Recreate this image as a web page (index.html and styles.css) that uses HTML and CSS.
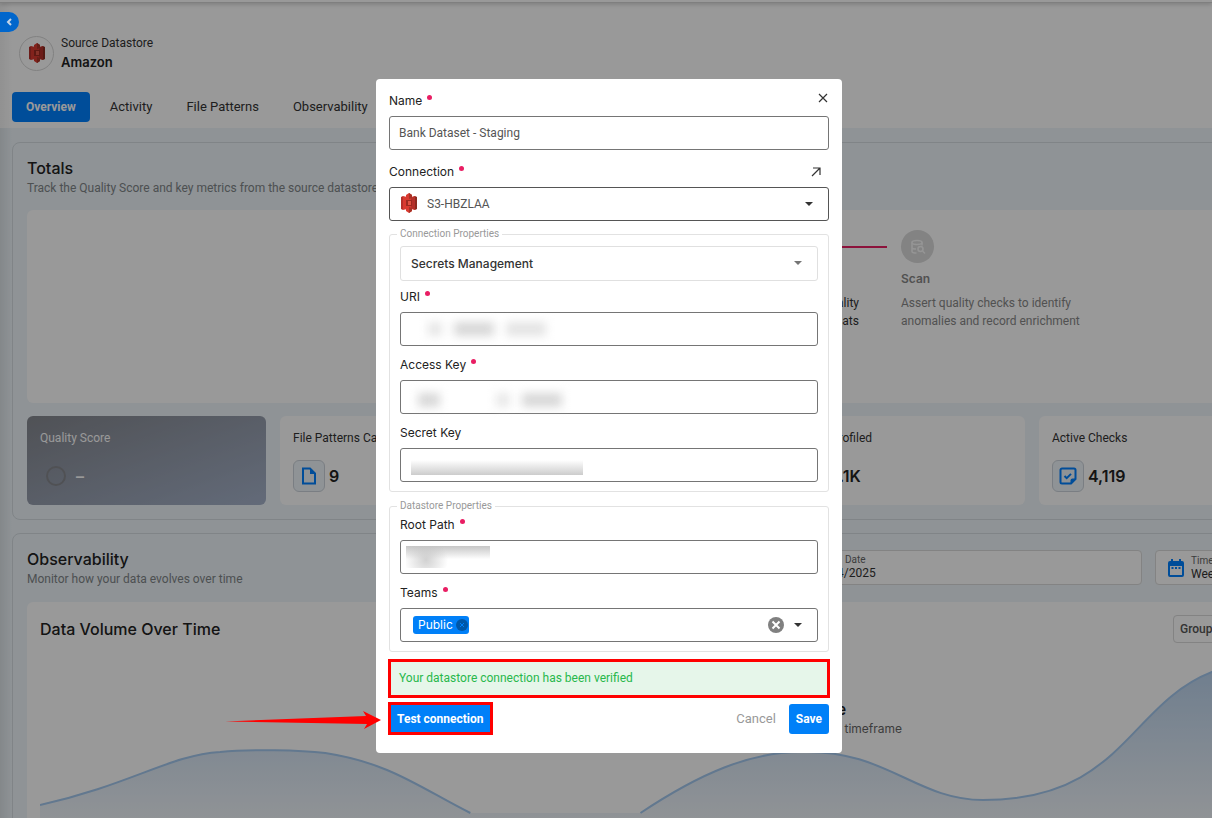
FILE: index.html
```html
<!DOCTYPE html>
<html lang="en">
<head>
<meta charset="utf-8">
<title>Amazon – Source Datastore</title>
<link rel="stylesheet" href="styles.css">
</head>
<body>
<svg class="defs" aria-hidden="true">
  <symbol id="s3" viewBox="0 0 18 20">
    <path fill="#b5302a" d="M1 4l2-1v14l-2-1z"/>
    <path fill="#d93a30" d="M3 3l4 1h4l4-1v14l-4-1H7l-4 1z"/>
    <path fill="#8c2a20" d="M15 3l2 1v12l-2 1z"/>
    <path fill="#b5302a" d="M11 5l4-2v14l-4-2z"/>
    <path fill="#d93a30" d="M6 2l3-2 3 2v3L9 6 6 5z"/>
    <path fill="#a83226" d="M9 0l3 2v3L9 6z"/>
    <path fill="#d93a30" d="M6 18l3 2 3-2v-3l-3-1-3 1z"/>
    <path fill="#a83226" d="M9 20l3-2v-3l-3-1z"/>
    <path fill="#9c2a20" d="M6 7h6v6H6z"/>
    <path fill="#e05243" d="M8 8h3v4H8z"/>
  </symbol>
  <symbol id="caret" viewBox="0 0 8 4"><path fill="currentColor" d="M0 0h8L4 4z"/></symbol>
</svg>

<div class="shell">
  <div class="topbar"></div>
  <main class="page">
    <header class="head">
      <div class="source">
        <span class="avatar"><svg width="18" height="20"><use href="#s3"/></svg></span>
        <div>
          <p class="kind">Source Datastore</p>
          <h1 class="store">Amazon</h1>
        </div>
      </div>
      <nav class="tabs">
        <a class="tab tab-on" href="#">Overview</a>
        <a class="tab" href="#">Activity</a>
        <a class="tab" href="#">File Patterns</a>
        <a class="tab" href="#">Observability</a>
      </nav>
    </header>

    <section class="panel">
      <h2 class="title">Totals</h2>
      <p class="sub">Track the Quality Score and key metrics from the source datastore</p>
      <div class="steps">
        <div class="step step-done">
          <div class="rail"></div>
          <p class="step-text">quality<br>formats</p>
        </div>
        <div class="step">
          <span class="bubble">
            <svg width="16" height="16" viewBox="0 0 16 16" fill="none" stroke="currentColor" stroke-width="1.600">
              <ellipse cx="7" cy="3.500" rx="5" ry="2"/><path d="M2 3.500v9c0 1 2 1.500 4.500 1.500M2 8.500c0 1 2 1.500 4 1.500M12 3.500v3"/><circle cx="10.500" cy="10" r="2.500"/><path d="M12.500 12l2.500 2.500"/>
            </svg>
          </span>
          <h3 class="step-name">Scan</h3>
          <p class="step-text">Assert quality checks to identify<br>anomalies and record enrichment</p>
        </div>
      </div>
      <div class="cards">
        <article class="card card-score">
          <h3 class="card-name">Quality Score</h3>
          <div class="metric"><span class="ring"></span><span class="dash">–</span></div>
        </article>
        <article class="card">
          <h3 class="card-name">File Patterns Ca</h3>
          <div class="metric">
            <span class="tile"><svg width="16" height="18" viewBox="0 0 16 18"><path fill="none" stroke="currentColor" stroke-width="2" d="M2 1.500h7l5 5v10H2z"/><path fill="currentColor" d="M9 1l6 6H9z"/></svg></span>
            <strong>9</strong>
          </div>
        </article>
        <article class="card card-blank"></article>
        <article class="card card-profiled">
          <h3 class="card-name">Profiled</h3>
          <div class="metric"><strong>.1K</strong></div>
        </article>
        <article class="card">
          <h3 class="card-name">Active Checks</h3>
          <div class="metric">
            <span class="tile"><svg width="18" height="18" viewBox="0 0 18 18"><path fill="none" stroke="currentColor" stroke-width="2" stroke-linejoin="round" d="M3 1.500h12a1.500 1.500 0 0 1 1.500 1.500v9L12 16.500H3A1.500 1.500 0 0 1 1.500 15V3A1.500 1.500 0 0 1 3 1.500z"/><path fill="currentColor" d="M17 11.500h-3.500a2 2 0 0 0-2 2V17z"/><path fill="none" stroke="currentColor" stroke-width="2" d="M5.500 9l2.200 2.200 4.300-4.300"/></svg></span>
            <strong>4,119</strong>
          </div>
        </article>
      </div>
    </section>

    <section class="panel panel-next">
      <div class="obs-head">
        <div>
          <h2 class="title">Observability</h2>
          <p class="sub">Monitor how your data evolves over time</p>
        </div>
        <div class="filters">
          <div class="filter filter-date"><span class="tiny">Date</span><span>4/2025</span></div>
          <div class="filter filter-time">
            <svg width="16" height="18" viewBox="0 0 16 18"><path fill="currentColor" fill-rule="evenodd" d="M2 2h1V0h2v2h6V0h2v2h1a2 2 0 0 1 2 2v12a2 2 0 0 1-2 2H2a2 2 0 0 1-2-2V4a2 2 0 0 1 2-2zm0 5v9h12V7z"/><path fill="currentColor" d="M3.500 8h2v2h-2zM7 8h2v2H7zM10.500 8h2v2h-2z"/></svg>
            <div class="stack"><span class="tiny">Timeframe</span><span>Week</span></div>
          </div>
        </div>
      </div>
      <div class="chart-card">
        <div class="chart-head">
          <h3 class="title">Data Volume Over Time</h3>
          <button class="group" type="button">Group By</button>
        </div>
        <svg class="chart" viewBox="0 0 1224 170" preserveAspectRatio="none" aria-hidden="true">
          <defs><linearGradient id="fill" x1="0" y1="0" x2="0" y2="1"><stop offset="0" stop-color="#b4cfec"/><stop offset="1" stop-color="#f0f5fa"/></linearGradient></defs>
          <path fill="url(#fill)" d="M0 157C90 137 130 107 180 104 210 101 260 102 285 105 350 115 380 140 430 165L600 165C660 125 710 104 760 104 845 101 875 152 942 152 1082 152 1087 57 1171 24L1224 5V170H0z"/>
          <path class="curve" d="M0 157C90 137 130 107 180 104 210 101 260 102 285 105 350 115 380 140 430 165M600 165C660 125 710 104 760 104 845 101 875 152 942 152 1082 152 1087 57 1171 24L1224 5"/>
        </svg>
        <div class="notice"><strong>e</strong><span>timeframe</span></div>
      </div>
    </section>
  </main>
</div>

<div class="overlay">
  <form class="dialog" role="dialog" aria-label="Edit datastore">
    <div class="row">
      <label class="label req" for="name">Name</label>
      <button class="icon-btn" type="button" aria-label="Close"><svg width="12" height="12" viewBox="0 0 12 12"><path class="line" d="M2 2l8 8M10 2l-8 8"/></svg></button>
    </div>
    <input class="field" id="name" type="text" value="Bank Dataset - Staging">

    <div class="row row-gap">
      <label class="label req" for="conn">Connection</label>
      <button class="icon-btn icon-link" type="button" aria-label="Open connection"><svg width="12" height="12" viewBox="0 0 12 12"><path class="line" d="M2 10l8-8M3 2h7v7"/></svg></button>
    </div>
    <div class="pick">
      <select class="field field-logo" id="conn"><option>S3-HBZLAA</option></select>
      <svg class="pick-logo" width="18" height="20"><use href="#s3"/></svg>
      <svg class="pick-caret" width="8" height="4"><use href="#caret"/></svg>
    </div>

    <fieldset class="group-box">
      <legend>Connection Properties</legend>
      <div class="pick pick-soft">
        <select class="field field-soft" aria-label="Secrets Management"><option>Secrets Management</option></select>
        <svg class="pick-caret" width="8" height="4"><use href="#caret"/></svg>
      </div>
      <label class="label req label-first" for="uri">URI</label>
      <div class="pick"><input class="field" id="uri" type="text"><span class="smudge smudge-uri"><i></i><i></i><i></i></span></div>
      <label class="label req label-next" for="akey">Access Key</label>
      <div class="pick"><input class="field" id="akey" type="text"><span class="smudge smudge-key"><i></i><i></i><i></i></span></div>
      <label class="label label-next" for="skey">Secret Key</label>
      <div class="pick"><input class="field" id="skey" type="password"><span class="fade"></span></div>
    </fieldset>

    <fieldset class="group-box group-store">
      <legend>Datastore Properties</legend>
      <label class="label req" for="root">Root Path</label>
      <div class="pick"><input class="field" id="root" type="text"><span class="fade-top"></span></div>
      <span class="label req label-next" id="teams-label">Teams</span>
      <div class="field teams" role="group" aria-labelledby="teams-label">
        <span class="chip">Public
          <button class="chip-x" type="button" aria-label="Remove Public"><svg width="12" height="12" viewBox="0 0 12 12"><circle cx="6" cy="6" r="6" fill="#0057a8"/><path stroke="#0080f8" d="M4 4l4 4M8 4l-4 4"/></svg></button>
        </span>
        <button class="clear" type="button" aria-label="Clear teams"><svg width="16" height="16" viewBox="0 0 16 16"><circle cx="8" cy="8" r="8" fill="#808080"/><path stroke="#fff" stroke-width="2" d="M4.500 4.500l7 7M11.500 4.500l-7 7"/></svg></button>
        <svg width="8" height="4"><use href="#caret"/></svg>
      </div>
    </fieldset>

    <p class="alert" role="status">Your datastore connection has been verified</p>
    <div class="actions">
      <div class="marked">
        <svg class="pointer" width="156" height="20" viewBox="0 0 156 20" aria-hidden="true"><path fill="#f00" d="M0 11.500L141 6l-3-5 18 9-17 9 3-5z"/></svg>
        <button class="btn btn-test" type="button">Test connection</button>
      </div>
      <button class="btn btn-plain" type="button">Cancel</button>
      <button class="btn" type="submit">Save</button>
    </div>
  </form>
</div>

<button class="toggle" type="button" aria-label="Collapse"><svg width="6" height="8" viewBox="0 0 6 8"><path fill="none" stroke="#c4d4e6" stroke-width="2" d="M5 1L2 4l3 3"/></svg></button>
</body>
</html>
```

FILE: styles.css
```css
* { box-sizing: border-box; }
body, h1, h2, h3, p { margin: 0; }
body, button, input, select {
  font-family: Roboto, "Noto Sans", sans-serif;
  font-size: 12px;
  color: #333;
}
body { line-height: 18px; }
button { border: 0; background: none; padding: 0; cursor: pointer; }
.defs { position: absolute; width: 0; height: 0; }
.label, .store, .title, .field-soft, .chip, .metric, .notice, .step-name { font-family: Inter, "Noto Sans", sans-serif; }

/* Page behind the dialog: wider than the window, cut at its right edge */
.shell { height: 100vh; overflow: hidden; background: #eef5fa; }
.topbar { height: 3px; background: #fff; border-bottom: 1px solid #d4d4d4; box-shadow: 0 1px 4px rgba(0, 0, 0, .25); position: relative; }
.page { width: calc(100% + 81px); background: linear-gradient(90deg, rgba(0, 0, 0, .08), transparent 12px); }

.head { background: linear-gradient(90deg, #f2f2f2, #fff 12px); padding: 31px 12px 6px; }
.source { display: flex; align-items: center; gap: 7px; padding-left: 7px; }
.avatar { width: 35px; height: 35px; border: 1px solid #d8d8d8; border-radius: 50%; display: grid; place-items: center; }
.kind { line-height: 18px; }
.store { font-size: 13px; font-weight: 600; line-height: 20px; color: #222; }
.tabs { display: flex; gap: 6px; margin-top: 20px; }
.tab { padding: 6px 14px; border-radius: 4px; color: #333; font-size: 13px; font-weight: 400; text-decoration: none; }
.tab-on { background: #0080ff; color: #fff; font-size: 12px; font-weight: 700; }

.panel { margin: 14px 0 0 12px; padding: 14px; border: 1px solid #d5dde2; border-radius: 8px; }
.panel-next { margin-top: 13px; }
.title { font-size: 16px; font-weight: 500; line-height: 22px; color: #222; }
.sub { color: #808588; line-height: 18px; }

.steps { display: grid; grid-template-columns: 1fr 377px; height: 193px; margin-top: 13px; padding-top: 20px; background: #fff; border-radius: 6px; }
.step { color: #888; }
.step-done { color: #333; display: flex; flex-direction: column; align-items: flex-end; padding-right: 14px; text-align: right; }
.step-done .step-text { padding-right: 28px; margin-top: 46px; }
.rail { width: 72px; height: 2px; margin-top: 16px; background: #e91e63; }
.bubble { display: grid; place-items: center; width: 33px; height: 33px; border-radius: 50%; background: #dadada; color: #f8f8f8; }
.step-name { font-size: 12px; font-weight: 600; line-height: 18px; margin: 7px 0 6px; }

.cards { display: grid; grid-template-columns: repeat(5, 1fr); gap: 14px; margin-top: 13px; }
.card { height: 89px; padding: 13px; background: #fff; border-radius: 6px; }
.card-name { font-size: 12px; font-weight: 400; line-height: 18px; color: #333; white-space: nowrap; }
.metric { display: flex; align-items: center; gap: 4px; height: 32px; margin-top: 13px; }
.metric strong { font-size: 16px; font-weight: 600; color: #222; }
.card-score { background: linear-gradient(160deg, #85888f, #a5b2ca); }
.card-score .card-name { color: #fff; }
.ring { width: 20px; height: 20px; margin: 0 4px 0 6px; border: 2px solid #85878d; border-radius: 50%; }
.dash { font-size: 16px; font-weight: 600; color: #fff; padding-left: 2px; }
.card-profiled { padding-left: 45px; }
.card-profiled .metric { padding-left: 8px; }
.tile { display: grid; place-items: center; width: 32px; height: 32px; border: 1px solid #ccd3da; border-radius: 6px; background: #eef5fa; color: #0080ff; }

.obs-head { display: flex; justify-content: space-between; }
.filters { display: flex; gap: 13px; margin-top: 2px; }
.filter { height: 35px; background: #fff; border: 1px solid #dadada; border-radius: 4px; line-height: 14px; padding: 3px 12px; }
.filter-date { width: 440px; padding-left: 134px; display: flex; flex-direction: column; }
.filter-date .tiny { padding-left: 8px; }
.filter-time { width: 123px; display: flex; align-items: center; gap: 7px; }
.filter-time svg { color: #0080ff; }
.stack { display: flex; flex-direction: column; }
.tiny { font-size: 10px; line-height: 12px; color: #666; }
.chart-card { position: relative; margin-top: 14px; padding: 13px; background: #fff; border-radius: 6px; }
.chart-head { display: flex; justify-content: space-between; align-items: center; }
.group { height: 28px; width: 92px; border: 1px solid #dadada; border-radius: 4px; text-align: left; padding: 0 6px; color: #555; font-weight: 500; }
.chart { display: block; width: 100%; height: 170px; margin-top: 5px; }
.curve { fill: none; stroke: #a3c8ef; stroke-width: 2; }
.notice { position: absolute; top: 98px; right: 376px; display: flex; flex-direction: column; align-items: flex-end; color: #666; }
.notice strong { font-size: 15px; font-weight: 600; line-height: 20px; color: #222; padding-right: 56px; }

/* Dialog */
.overlay { position: fixed; inset: 0; display: grid; place-items: center; padding: 14px 0 0 6px; background: rgba(0, 0, 0, .4); }
.dialog { width: 100%; max-width: 466px; padding: 13px 13px 18px; background: #fff; border-radius: 4px; }
.row { display: flex; justify-content: space-between; align-items: center; height: 18px; margin-bottom: 6px; }
.row-gap { margin-top: 13px; }
.label { display: block; width: fit-content; font-weight: 400; line-height: 18px; color: #222; margin-bottom: 6px; }
.row .label { margin: 0; }
.label.label-first { margin-top: 7px; }
.label.label-next { margin-top: 10px; }
.req::after { content: ""; display: inline-block; width: 5px; height: 5px; margin-left: 5px; border-radius: 50%; background: #e91e63; vertical-align: 5px; }
.icon-btn { display: grid; padding-bottom: 6px; }
.icon-link { padding: 0 7px 0 0; }
.line { fill: none; stroke: #333; stroke-width: 1.2; }
.field { appearance: none; display: block; width: 100%; height: 34px; padding: 0 9px; border: 1px solid #757575; border-radius: 3px; background: #fff; color: #555; }
.field-logo { padding-left: 37px; border-color: #555; }
.pick { position: relative; color: #333; }
.pick-logo { position: absolute; left: 11px; top: 6px; }
.pick-caret { position: absolute; right: 16px; top: 15px; }
.pick-soft { color: #757575; }
.field-soft { height: 35px; padding: 0 10px; border-color: #e0e0e0; color: #333; font-weight: 500; }
.group-box { min-width: 0; margin: 6px 0 0; padding: 5px 10px 9px; border: 1px solid #e2e2e2; border-radius: 3px; }
.group-box legend { margin-left: -3px; padding: 0 3px; font-size: 10px; line-height: 14px; color: #999; }
.group-store { margin-top: 7px; padding-top: 3px; }

/* Obscured values */
.smudge { position: absolute; left: 18px; top: 10px; display: flex; gap: 12px; filter: blur(5px); pointer-events: none; }
.smudge i { height: 14px; width: 40px; background: #d8d8d8; }
.smudge-uri { left: 28px; }
.smudge-uri i:first-child { width: 14px; background: #e6e6e6; }
.smudge-uri i:last-child { background: #e4e4e4; }
.smudge-key { top: 13px; }
.smudge-key i:first-child { width: 22px; margin-right: 44px; }
.smudge-key i:nth-child(2) { width: 14px; background: #e8e8e8; }
.fade { position: absolute; left: 11px; top: 12px; width: 172px; height: 15px; background: linear-gradient(#fff, #ccc); }
.fade-top { position: absolute; left: 6px; top: 6px; width: 84px; height: 22px; background: radial-gradient(circle at 20px 14px, rgba(190, 190, 190, .7), transparent 22px), linear-gradient(#c6c6c6, #fff 60%); }

.teams { display: flex; align-items: center; gap: 10px; padding: 0 15px 0 12px; color: #333; }
.chip { display: flex; align-items: center; gap: 3px; height: 18px; padding: 0 1px 0 5px; border-radius: 3px; background: #0080f8; color: #fff; }
.chip-x, .clear { display: grid; }
.clear { margin-left: auto; }
.alert { height: 39px; margin: 7px -1px 4px; padding: 0 8px; border: 3px solid #f00; background: #e6f6ea; color: #28b84c; line-height: 33px; }
.actions { display: flex; align-items: center; gap: 6px; }
.marked { position: relative; margin: 0 auto 0 -1px; border: 3px solid #f00; }
.pointer { position: absolute; right: calc(100% + 10px); top: 5px; }
.btn { height: 30px; padding: 0 7px; border-radius: 3px; background: #0080f8; color: #fff; font-weight: 700; }
.btn-test { display: block; height: 27px; padding: 0 6px; border-radius: 0; }
.btn-plain { background: none; color: #999; font-size: 13px; font-weight: 400; }

.toggle { position: fixed; left: 0; top: 12px; width: 19px; height: 20px; padding-right: 2px; border-radius: 0 10px 10px 0; background: #0066cc; display: grid; place-items: center; }
```
